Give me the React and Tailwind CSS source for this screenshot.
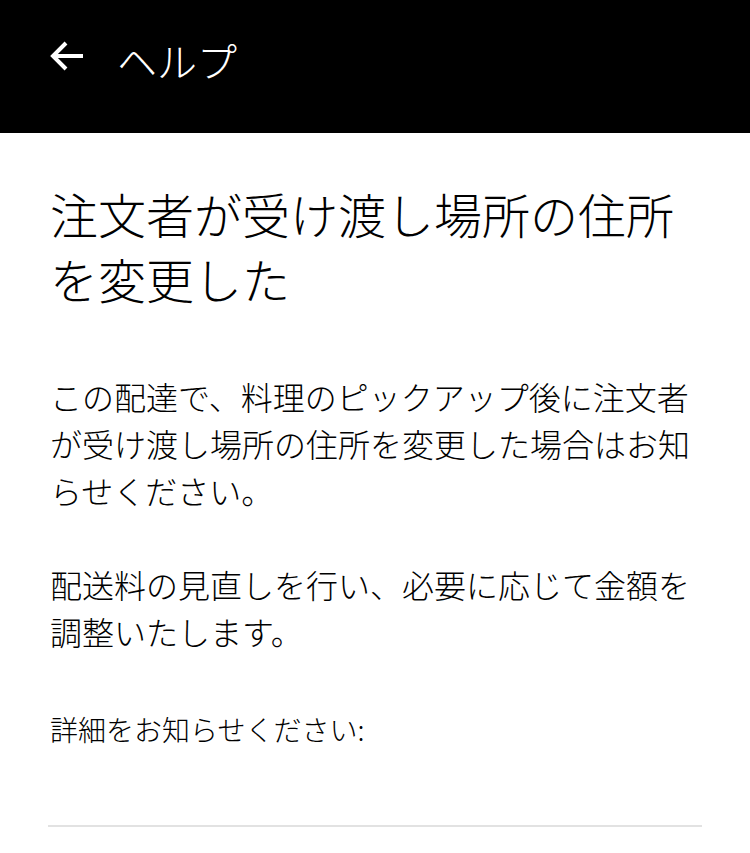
export default function App() {
  return (
    <div className="min-h-screen bg-white text-black" style={{ fontFamily: '"Noto Sans CJK JP", "Noto Sans", sans-serif' }}>
      <header className="h-[133px] bg-black flex items-start pt-[34px] pl-[50px]">
        <button className="w-[34px] h-[44px] flex items-center text-white" aria-label="戻る">
          <svg width="34" height="30" viewBox="0 0 34 30" fill="none" stroke="currentColor" strokeWidth="4" strokeLinecap="butt" strokeLinejoin="miter">
            <path d="M33 15H4" />
            <path d="M16 2L3 15l13 13" />
          </svg>
        </button>
        <h1 className="ml-[33px] text-[40px] leading-[52px] text-white font-light">ヘルプ</h1>
      </header>

      <main className="px-[50px] font-light">
        <h2 className="mt-[48px] text-[48px] leading-[65px] font-light">注文者が受け渡し場所の住所を変更した</h2>
        <p className="mt-[62px] text-[32px] leading-[47px]">
          この配達で、料理のピックアップ後に注文者が受け渡し場所の住所を変更した場合はお知らせください。
        </p>
        <p className="mt-[47px] text-[32px] leading-[47px]">
          配送料の見直しを行い、必要に応じて金額を調整いたします。
        </p>
        <p className="mt-[54px] text-[28px] leading-[40px]">詳細をお知らせください:</p>
      </main>

      <div className="mt-[76px] mx-[48px] h-[2px] bg-[#e2e2e2]" />
    </div>
  );
}
